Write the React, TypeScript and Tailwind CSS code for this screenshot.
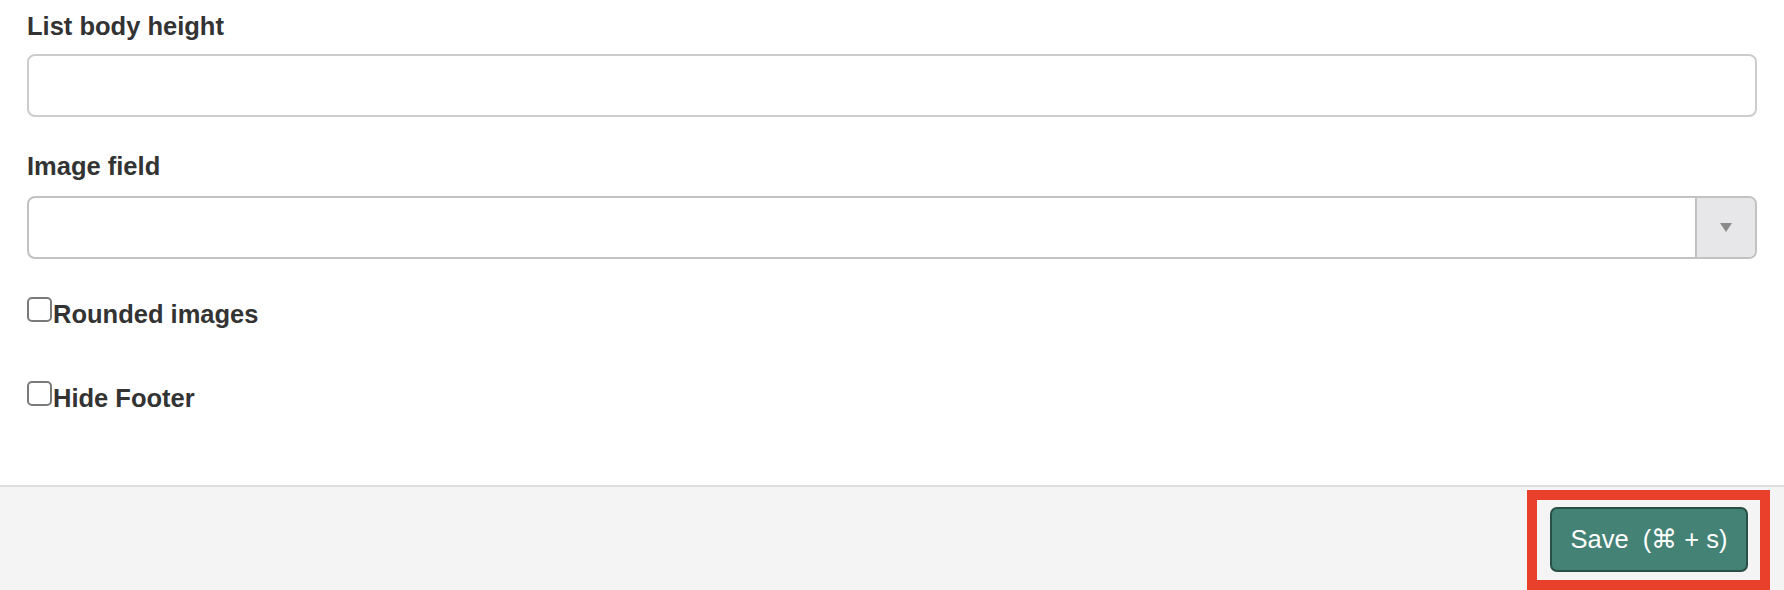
export default function App() {
  const font = { fontFamily: '"Liberation Sans", Arial, sans-serif' };
  return (
    <div className="w-[1784px] h-[590px] bg-white text-[#333]" style={font}>
      <div className="h-[485px] px-[27px] pt-[8px]">
        <label className="block text-[25.5px] leading-[36px] font-bold">List body height</label>
        <input
          type="text"
          className="mt-[10px] block w-[1730px] h-[63px] rounded-[8px] border-2 border-[#cccccc] bg-white px-3 outline-none"
        />

        <label className="mt-[31px] block text-[25.5px] leading-[36px] font-bold">Image field</label>
        <div className="mt-[12px] flex w-[1730px] h-[63px] rounded-[8px] border-2 border-[#c2c2c2] bg-white overflow-hidden">
          <div className="flex-1" />
          <div className="w-[60px] border-l-2 border-[#c2c2c2] bg-[#e7e7e9] flex items-center justify-center">
            <svg width="12" height="9" viewBox="0 0 12 9">
              <path d="M0 0 L12 0 L6 9 Z" fill="#8a8a8a" />
            </svg>
          </div>
        </div>

        <div className="mt-[37px] flex items-start">
          <span className="mt-px block w-[25px] h-[25px] rounded-[5px] border-2 border-[#7a7a7a] bg-white" />
          <span className="ml-[1px] text-[25.5px] leading-[36px] font-bold">Rounded images</span>
        </div>
        <div className="mt-[48px] flex items-start">
          <span className="mt-px block w-[25px] h-[25px] rounded-[5px] border-2 border-[#7a7a7a] bg-white" />
          <span className="ml-[1px] text-[25.5px] leading-[36px] font-bold">Hide Footer</span>
        </div>
      </div>

      <div className="h-[105px] border-t-2 border-[#dddddd] bg-[#f4f4f4] flex justify-end items-start pt-[3px] pr-[14px]">
        <div className="border-[10px] border-[#e9402b] pl-[13px] pr-[12px] pt-[7px] pb-[8px]">
          <button className="w-[198px] h-[65px] rounded-[7px] border-2 border-[#2a4f47] bg-[#438275] text-white text-[25.5px] flex items-center justify-center whitespace-pre">
            Save  (⌘ + s)
          </button>
        </div>
      </div>
    </div>
  );
}
